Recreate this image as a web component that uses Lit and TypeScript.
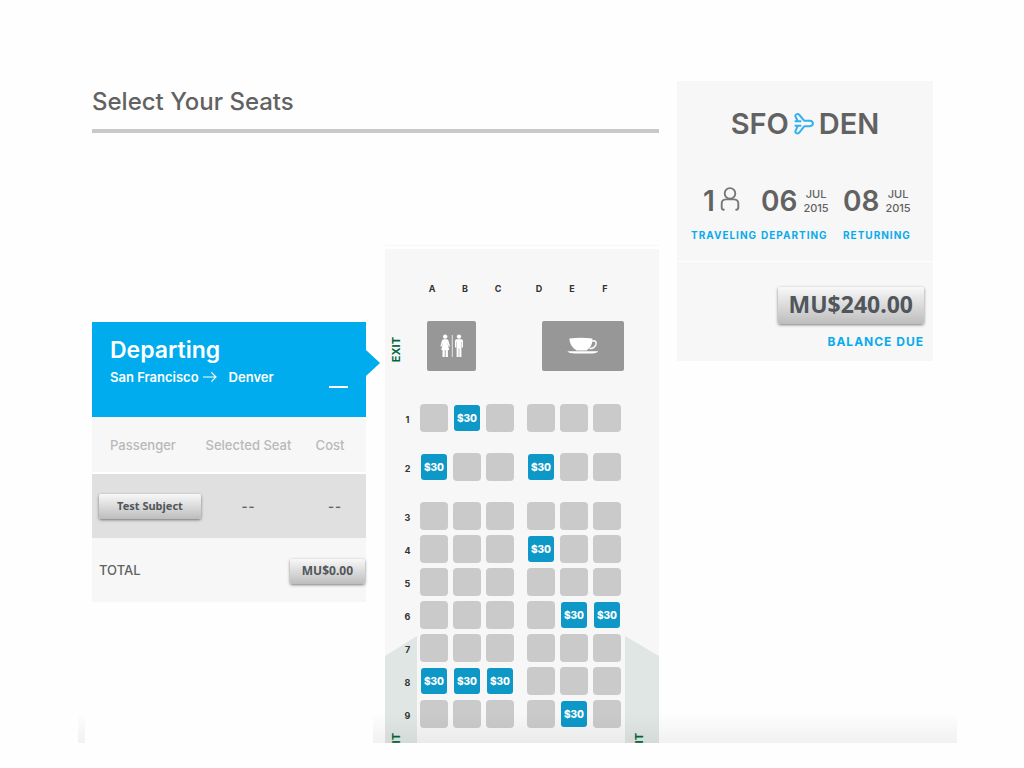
import { LitElement, html, css, svg } from "lit";
import { customElement, property } from "lit/decorators.js";
import { classMap } from "lit/directives/class-map.js";

const LETTERS = ["A", "B", "C", "D", "E", "F"];

interface SeatRow {
  number: number;
  priced: string;
  spaced?: boolean;
}

const ROWS: SeatRow[] = [
  { number: 1, priced: "B", spaced: true },
  { number: 2, priced: "AD", spaced: true },
  { number: 3, priced: "" },
  { number: 4, priced: "D" },
  { number: 5, priced: "" },
  { number: 6, priced: "EF" },
  { number: 7, priced: "" },
  { number: 8, priced: "ABC" },
  { number: 9, priced: "E" },
];

const planeIcon = svg`<svg width="20" height="22" viewBox="0 0 20 22" fill="none" stroke="#34b0ee" stroke-width="2" stroke-linejoin="round" stroke-linecap="round">
  <path d="M3.8 8.2L1.3 3C1.3 1 4.2 .4 5.4 2L10.4 7.8H15.6C20 8.2 20 12.8 15.6 13.2H10.4L5.4 19.4C4.2 21 1.3 20.6 1.3 18.4L3.8 12.8M1.4 8.2H6.6M1.4 12.8H6.6"/></svg>`;

const personIcon = svg`<svg width="20" height="24" viewBox="0 0 20 24" fill="none" stroke="#777" stroke-width="1.9" stroke-linecap="round" stroke-linejoin="round">
  <circle cx="10" cy="6.4" r="5.3"/>
  <path d="M3.8 22.8Q1.7 22.4 1.7 20.4V16.4Q1.9 12.6 6 12.4H14Q18.1 12.6 18.3 16.4V20.4Q18.3 22.4 16.2 22.8"/></svg>`;

const arrowIcon = svg`<svg width="14" height="12" viewBox="0 0 14 12" fill="none" stroke="#fff" stroke-width="1.2">
  <path d="M0 6H13M8.4 1.4L13 6L8.4 10.6"/></svg>`;

const restroomIcon = svg`<svg width="24" height="24" viewBox="0 0 24 24" fill="#fff">
  <circle cx="5.2" cy="2.6" r="2.2"/>
  <path d="M3.5 5.2H6.9Q8 5.3 8.4 6.6L10 12.2L8.9 12.7L7.2 8.2L9.2 16H7.9V23H5.6V16H4.8V23H2.5V16H1.2L3.2 8.2L1.5 12.7L.4 12.2L2 6.6Q2.4 5.3 3.5 5.2Z"/>
  <rect x="11.8" y="1" width="1" height="22" opacity=".75"/>
  <circle cx="19" cy="2.6" r="2.2"/>
  <path d="M16.6 5.2H21.4Q23 5.4 23 7V13.4H21.8V7.8H21.4V23H19.3V14.4H18.7V23H16.6V7.8H16.2V13.4H15V7Q15 5.4 16.6 5.2Z"/></svg>`;

const cupIcon = svg`<svg width="32" height="18" viewBox="0 0 32 18">
  <path fill="#fff" d="M2.4 1.6Q14 0 25.4 1.6C25.8 6.6 23.6 11 19.6 13.4H9.6C5 11 2.6 6.6 2.4 1.6Z"/>
  <path fill="none" stroke="#fff" stroke-width="1.5" d="M25.2 4.2C28 3 30 5 28.8 7.8C27.6 10.2 25 11.6 22.6 11.4"/>
  <path fill="#fff" d="M.4 14.2H31.2Q30 16.2 25 16.4H8Q2 16.4 .4 14.2Z"/></svg>`;

const shared = css`
  :host {
    display: block;
    box-sizing: border-box;
    color: #626262;
    font-family: Inter, "Liberation Sans", sans-serif;
  }
  *,
  *::before,
  *::after {
    box-sizing: border-box;
  }
  h1,
  h2,
  p {
    margin: 0;
  }
  button {
    margin: 0;
    padding: 0;
    border: 0;
    font-family: inherit;
    cursor: pointer;
  }
  .raised {
    border-radius: 2px;
    color: #50565c;
    font-family: "Noto Sans", "Open Sans", sans-serif;
    font-weight: 700;
    background: linear-gradient(#f8f8f8, #bdbdbd);
    box-shadow: 0 1px 3px rgba(0, 0, 0, 0.5);
  }
`;

@customElement("trip-summary")
export class TripSummary extends LitElement {
  static styles = [
    shared,
    css`
      .trip,
      .balance {
        background: #f7f7f7;
      }
      .trip {
        padding: 26px 14px 19px;
      }
      .route {
        display: flex;
        justify-content: center;
        align-items: center;
        gap: 5px;
        font-size: 29px;
        line-height: 34px;
        font-weight: 600;
      }
      .facts {
        display: grid;
        grid-template-columns: 70px 82px 1fr;
        margin-top: 42px;
      }
      .value {
        display: flex;
        align-items: center;
        gap: 6px;
        height: 36px;
        font-size: 28px;
        font-weight: 600;
      }
      .travelers {
        padding-left: 12px;
        gap: 5px;
      }
      .travelers svg {
        margin-bottom: 4px;
      }
      .month {
        font-size: 11px;
        line-height: 14px;
        font-weight: 500;
        text-align: center;
      }
      .label {
        color: #0aabec;
        font-size: 10px;
        line-height: 14px;
        font-weight: 700;
        letter-spacing: 1px;
        margin-top: 9px;
        white-space: nowrap;
      }
      .balance {
        display: flex;
        flex-direction: column;
        align-items: flex-end;
        gap: 10px;
        margin-top: 1px;
        padding: 25px 9px 11px;
      }
      .amount {
        height: 37px;
        padding: 0 11px 3px;
        font-size: 23px;
        line-height: 34px;
      }
      .balance .label {
        margin: 0;
        font-size: 12px;
        line-height: 16px;
      }
    `,
  ];

  render() {
    return html`
      <section class="trip">
        <h2 class="route"><span>SFO</span>${planeIcon}<span>DEN</span></h2>
        <div class="facts">
          <div>
            <div class="value travelers"><span>1</span>${personIcon}</div>
            <p class="label">TRAVELING</p>
          </div>
          <div>
            <div class="value"><span>06</span><span class="month">JUL<br />2015</span></div>
            <p class="label">DEPARTING</p>
          </div>
          <div>
            <div class="value"><span>08</span><span class="month">JUL<br />2015</span></div>
            <p class="label">RETURNING</p>
          </div>
        </div>
      </section>
      <section class="balance">
        <button class="raised amount">MU$240.00</button>
        <p class="label">BALANCE DUE</p>
      </section>
    `;
  }
}

@customElement("passenger-panel")
export class PassengerPanel extends LitElement {
  static styles = [
    shared,
    css`
      .head {
        position: relative;
        display: flex;
        justify-content: space-between;
        height: 95px;
        padding: 13px 18px;
        color: #fff;
        background: #00aced;
      }
      .head::after {
        content: "";
        position: absolute;
        left: 100%;
        top: 28px;
        width: 14px;
        height: 26px;
        background: #00aced;
        clip-path: polygon(0 0, 100% 50%, 0 100%);
      }
      .direction {
        font-size: 23px;
        line-height: 31px;
        font-weight: 600;
      }
      .cities {
        display: flex;
        align-items: center;
        gap: 4px;
        font-size: 13px;
        line-height: 22px;
        font-weight: 600;
      }
      .cities span:last-child {
        margin-left: 8px;
      }
      .collapse {
        align-self: flex-start;
        width: 19px;
        height: 20px;
        margin-top: 33px;
        background: none;
        border-bottom: 2px solid #fff;
      }
      table {
        width: 100%;
        border-collapse: collapse;
        table-layout: fixed;
        background: #f7f7f7;
        font-size: 13px;
      }
      .who {
        width: 111px;
      }
      .cost {
        width: 72px;
      }
      th,
      td {
        padding: 0;
        text-align: center;
        font-weight: 600;
      }
      thead th {
        height: 56px;
        color: #b9b9b9;
        font-weight: 500;
        border-bottom: 2px solid #fff;
        white-space: nowrap;
      }
      thead th:first-child {
        padding-left: 18px;
        text-align: left;
      }
      tbody th,
      tfoot th {
        padding-left: 7px;
        text-align: left;
      }
      tbody td,
      tbody th {
        height: 65px;
        background: #e0e0e0;
      }
      tbody td {
        letter-spacing: 1px;
      }
      tbody td:last-child {
        padding-left: 10px;
      }
      tfoot th,
      tfoot td {
        height: 64px;
        font-weight: 500;
      }
      tfoot td {
        padding: 2px 1px 0 0;
        text-align: right;
      }
      .raised {
        height: 25px;
        font-size: 12px;
        line-height: 24px;
      }
      .name {
        width: 102px;
        font-size: 11px;
      }
      .sum {
        padding: 0 12px;
      }
    `,
  ];

  render() {
    return html`
      <header class="head">
        <div>
          <h2 class="direction">Departing</h2>
          <p class="cities"><span>San Francisco</span>${arrowIcon}<span>Denver</span></p>
        </div>
        <button class="collapse" aria-label="Collapse"></button>
      </header>
      <table>
        <colgroup>
          <col class="who" />
          <col />
          <col class="cost" />
        </colgroup>
        <thead>
          <tr><th scope="col">Passenger</th><th scope="col">Selected Seat</th><th scope="col">Cost</th></tr>
        </thead>
        <tbody>
          <tr><th scope="row"><button class="raised name">Test Subject</button></th><td>--</td><td>--</td></tr>
        </tbody>
        <tfoot>
          <tr><th scope="row">TOTAL</th><td colspan="2"><button class="raised sum">MU$0.00</button></td></tr>
        </tfoot>
      </table>
    `;
  }
}

@customElement("seat-map")
export class SeatMap extends LitElement {
  @property({ attribute: false }) rows: SeatRow[] = ROWS;

  static styles = [
    shared,
    css`
      :host {
        border-top: 1px solid #f7f7f7;
        padding-top: 3px;
      }
      .cabin {
        display: grid;
        grid-template-columns: 32px 1fr 34px;
        height: 100%;
        background: #f7f7f7;
      }
      .rail {
        grid-row: 1;
        grid-column: 1;
        display: grid;
        grid-template-rows: 387px 1fr;
      }
      .right {
        grid-column: 3;
      }
      .door {
        padding: 88px 0 0 4px;
      }
      .wing {
        padding: 97px 0 0 4px;
        background: #e0e6e4;
        clip-path: polygon(0 20px, 100% 0, 100% 100%, 0 100%);
      }
      .right .wing {
        padding-left: 7px;
        clip-path: polygon(0 0, 100% 20px, 100% 100%, 0 100%);
      }
      .exit {
        display: block;
        width: 14px;
        color: #00663f;
        font-size: 11px;
        line-height: 14px;
        font-weight: 700;
        writing-mode: vertical-rl;
        transform: rotate(180deg);
      }
      .seats {
        z-index: 1;
        grid-row: 1;
        grid-column: 1 / -1;
        padding: 32px 0 0 15px;
      }
      .row {
        display: grid;
        grid-template-columns: 15px repeat(3, 28px) 3px repeat(3, 28px);
        column-gap: 5px;
        align-items: center;
        justify-items: center;
        height: 28px;
        margin-bottom: 5px;
        color: #333;
        font-size: 9px;
        font-weight: 700;
      }
      .spaced {
        margin-bottom: 21px;
      }
      .letters {
        height: 14px;
        margin: 0;
      }
      .letters span {
        padding-right: 4px;
      }
      .number {
        padding-top: 3px;
      }
      .d {
        grid-column: 6;
      }
      .seat {
        width: 28px;
        height: 28px;
        border-radius: 4px;
        background: #cacaca;
      }
      .priced {
        width: 26px;
        height: 26px;
        border-radius: 3px;
        color: #fff;
        background: #0d98c8;
        font-size: 10px;
        font-weight: 800;
      }
      .services {
        display: flex;
        gap: 66px;
        margin: 26px 0 33px;
        padding-left: 27px;
      }
      .service {
        display: grid;
        place-items: center;
        width: 49px;
        height: 50px;
        border-radius: 2px;
        background: #979797;
      }
      .galley {
        width: 82px;
      }
    `,
  ];

  render() {
    return html`
      <div class="cabin">
        <div class="rail">
          <div class="door"><span class="exit">EXIT</span></div>
          <div class="wing"><span class="exit">EXIT</span></div>
        </div>
        <div class="rail right">
          <div></div>
          <div class="wing"><span class="exit">EXIT</span></div>
        </div>
        <div class="seats">
          <div class="row letters">
            <i></i>
            ${LETTERS.map((l) => html`<span class=${classMap({ d: l === "D" })}>${l}</span>`)}
          </div>
          <div class="services">
            <div class="service">${restroomIcon}</div>
            <div class="service galley">${cupIcon}</div>
          </div>
          ${this.rows.map(
            (row) => html`<div class=${classMap({ row: true, spaced: !!row.spaced })}>
              <span class="number">${row.number}</span>
              ${LETTERS.map((l) => {
                const priced = row.priced.includes(l);
                return html`<button
                  class=${classMap({ seat: true, priced, d: l === "D" })}
                  aria-label="Seat ${row.number}${l}"
                  ?disabled=${!priced}
                >${priced ? "$30" : ""}</button>`;
              })}
            </div>`
          )}
        </div>
      </div>
    `;
  }
}

@customElement("app-root")
export class AppRoot extends LitElement {
  static styles = [
    shared,
    css`
      :host {
        height: 100vh;
        padding: 0 67px 25px 78px;
        background: #fefefe;
      }
      .stage {
        position: relative;
        height: 100%;
        overflow: hidden;
      }
      .stage::after {
        content: "";
        position: absolute;
        inset: auto 0 0;
        z-index: 1;
        height: 30px;
        background: linear-gradient(rgba(0, 0, 0, 0), rgba(0, 0, 0, 0.05));
        pointer-events: none;
      }
      .page {
        display: grid;
        grid-template-columns: minmax(0, 1fr) 256px;
        gap: 18px;
        height: 100%;
        padding: 0 24px 0 14px;
      }
      main {
        display: flex;
        flex-direction: column;
        min-height: 0;
      }
      h1 {
        padding: 87px 0 12px;
        border-bottom: 4px solid #c9c9c9;
        font-size: 24px;
        line-height: 30px;
        font-weight: 500;
      }
      .booking {
        flex: 1;
        display: grid;
        grid-template-columns: minmax(0, 1fr) 274px;
        gap: 12px;
        min-height: 0;
        margin-left: -7px;
      }
      .side {
        position: relative;
        z-index: 2;
        padding: 189px 7px 0;
        background: #fefefe;
      }
      seat-map {
        margin-top: 112px;
      }
      trip-summary {
        margin-top: 81px;
      }
    `,
  ];

  render() {
    return html`
      <div class="stage">
        <div class="page">
          <main>
            <h1>Select Your Seats</h1>
            <div class="booking">
              <div class="side"><passenger-panel></passenger-panel></div>
              <seat-map></seat-map>
            </div>
          </main>
          <trip-summary></trip-summary>
        </div>
      </div>
    `;
  }
}
